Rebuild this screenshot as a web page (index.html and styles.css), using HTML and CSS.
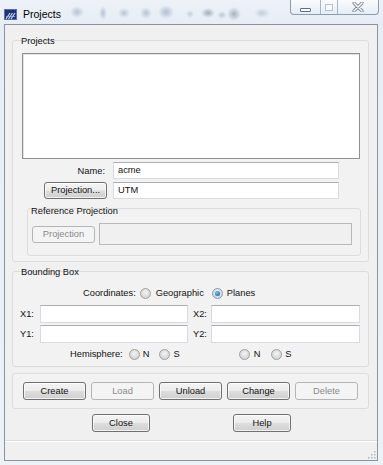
FILE: index.html
```
<!DOCTYPE html>
<html>
<head>
<meta charset="utf-8">
<link rel="stylesheet" href="styles.css">
</head>
<body>
<div class="window">
  <div class="titlebar">
    <svg class="app-icon" viewBox="0 0 13 11" width="13" height="11">
      <rect x="0" y="0" width="13" height="11" fill="#1d3478"/>
      <rect x="0.5" y="0.5" width="12" height="10" fill="none" stroke="#5a6ea8" stroke-width="1"/>
      <path d="M2 10 L6 4 M4.5 10 L8.5 4 M7 10 L11 4" stroke="#c8d4f0" stroke-width="1.2"/>
      <path d="M2 7.5 H11" stroke="#9fb2e0" stroke-width="0.8"/>
    </svg>
    <span class="title">Projects</span>
    <div class="caption">
      <span class="cap cap-min"><i class="min-glyph"></i></span>
      <span class="cap cap-max"><i class="max-glyph"></i></span>
      <span class="cap cap-close">
        <svg viewBox="0 0 12 10" width="12" height="10">
          <path d="M2 1 L10 9 M10 1 L2 9" stroke="#7d8a98" stroke-width="3.2" stroke-linecap="round"/>
          <path d="M2 1 L10 9 M10 1 L2 9" stroke="#ffffff" stroke-width="1.4" stroke-linecap="round"/>
        </svg>
      </span>
    </div>
  </div>

  <div class="client">
    <div class="group group-projects">
      <div class="group-title">Projects</div>
      <div class="listbox"></div>
      <div class="form-grid">
        <span class="lbl-right">Name:</span>
        <div class="field">acme</div>
        <button class="btn btn-proj">Projection...</button>
        <div class="field">UTM</div>
      </div>
      <div class="group group-ref">
        <div class="group-title">Reference Projection</div>
        <div class="ref-row">
          <button class="btn btn-disabled btn-refproj">Projection</button>
          <div class="field field-disabled"></div>
        </div>
      </div>
    </div>

    <div class="group group-bbox">
      <div class="group-title">Bounding Box</div>
      <div class="coords-row">
        <span>Coordinates:</span>
        <span class="radio r-geo"></span><span>Geographic</span>
        <span class="radio radio-on r-planes"></span><span>Planes</span>
      </div>
      <div class="xy-grid">
        <span>X1:</span><div class="field"></div>
        <span class="lbl2">X2:</span><div class="field"></div>
        <span>Y1:</span><div class="field"></div>
        <span class="lbl2">Y2:</span><div class="field"></div>
      </div>
      <div class="hemi-row">
        <span>Hemisphere:</span>
        <span class="radio h1"></span><span>N</span>
        <span class="radio h2"></span><span>S</span>
        <span class="radio h3"></span><span>N</span>
        <span class="radio h4"></span><span>S</span>
      </div>
    </div>

    <div class="group group-buttons">
      <button class="btn act">Create</button>
      <button class="btn act btn-disabled">Load</button>
      <button class="btn act">Unload</button>
      <button class="btn act">Change</button>
      <button class="btn act btn-disabled">Delete</button>
    </div>

    <div class="close-row">
      <button class="btn dlg">Close</button>
      <button class="btn dlg">Help</button>
    </div>

    <div class="separator"></div>
    <div class="statusbar">
      <svg class="grip" viewBox="0 0 8 8" width="8" height="8">
        <rect x="6" y="0" width="1.5" height="1.5" fill="#b8b8b8"/>
        <rect x="3" y="3" width="1.5" height="1.5" fill="#b8b8b8"/>
        <rect x="6" y="3" width="1.5" height="1.5" fill="#b8b8b8"/>
        <rect x="0" y="6" width="1.5" height="1.5" fill="#b8b8b8"/>
        <rect x="3" y="6" width="1.5" height="1.5" fill="#b8b8b8"/>
        <rect x="6" y="6" width="1.5" height="1.5" fill="#b8b8b8"/>
      </svg>
    </div>
  </div>
</div>
</body>
</html>
```
FILE: styles.css
```
* { box-sizing: border-box; }

html, body {
  margin: 0;
  padding: 0;
}

body {
  width: 383px;
  height: 465px;
  overflow: hidden;
  font-family: "Liberation Sans", Arial, sans-serif;
  font-size: 9.3px;
  color: #111;
}

.window {
  width: 383px;
  height: 465px;
  display: flex;
  flex-direction: column;
  background:
    radial-gradient(ellipse 7px 6px at 77px 12px, rgba(120,140,170,0.45), transparent),
    radial-gradient(ellipse 4px 7px at 103px 13px, rgba(120,140,170,0.45), transparent),
    radial-gradient(ellipse 6px 5px at 124px 13px, rgba(120,140,170,0.45), transparent),
    radial-gradient(ellipse 6px 6px at 146px 13px, rgba(120,140,170,0.45), transparent),
    radial-gradient(ellipse 8px 7px at 166px 12px, rgba(120,140,170,0.5), transparent),
    radial-gradient(ellipse 4px 4px at 190px 14px, rgba(120,140,170,0.35), transparent),
    radial-gradient(ellipse 7px 5px at 208px 13px, rgba(90,105,130,0.5), transparent),
    radial-gradient(ellipse 5px 4px at 222px 15px, rgba(120,140,170,0.4), transparent),
    radial-gradient(ellipse 7px 7px at 234px 14px, rgba(100,115,140,0.5), transparent),
    radial-gradient(ellipse 8px 5px at 262px 13px, rgba(120,140,170,0.35), transparent),
    linear-gradient(180deg, #edf2f8 0px, #e6edf4 24px, #edf2f7 465px);
}

/* Title bar */
.titlebar {
  height: 24px;
  display: flex;
  align-items: flex-start;
  flex: none;
}

.app-icon {
  margin: 9px 0 0 4px;
  flex: none;
}

.title {
  margin: 8px 0 0 6px;
  font-size: 10.5px;
  line-height: 12px;
  color: #000;
}

.caption {
  margin-left: auto;
  margin-right: 4px;
  height: 15px;
  display: flex;
  border: 1px solid #8c9cb0;
  border-top: none;
  border-radius: 0 0 4px 4px;
  background: linear-gradient(180deg, rgba(255,255,255,0.7), rgba(225,235,245,0.6));
  overflow: hidden;
}

.cap {
  height: 14px;
  display: flex;
  align-items: center;
  justify-content: center;
}

.cap-min { width: 30px; border-right: 1px solid #a6b4c4; }
.cap-max { width: 17px; border-right: 1px solid #a6b4c4; }
.cap-close { width: 40px; }

.min-glyph {
  display: block;
  width: 11px;
  height: 4px;
  margin-top: 5px;
  border: 1px solid #5f6e80;
  background: #fff;
  border-radius: 1px;
}

.max-glyph {
  display: block;
  width: 8px;
  height: 7px;
  border: 1px solid #b4c0cc;
  background: rgba(255,255,255,0.6);
}

/* Client area */
.client {
  flex: 1;
  margin: 0 5px 4px 4px;
  border: 1px solid #8a949e;
  background: #f0f0f0;
  display: flex;
  flex-direction: column;
}

.group {
  border: 1px solid #dcdcdc;
  border-radius: 3px;
  background: #f2f2f2;
}

.group-title {
  line-height: 12px;
  height: 12px;
  margin-top: -6px;
  margin-left: 7px;
  padding: 0 1px;
  align-self: flex-start;
  display: inline-block;
  background: transparent;
}

.group-projects {
  margin: 15px 8px 0 7px;
  padding-bottom: 5px;
  display: flex;
  flex-direction: column;
}

.listbox {
  margin: 6px 8px 0 9px;
  height: 106px;
  background: #fff;
  border: 1px solid #8e8f8f;
  box-shadow: inset 1px 1px 0 #e3e3e3;
}

.form-grid {
  margin: 3px 0 0 9px;
  display: grid;
  grid-template-columns: 85px 226px;
  grid-auto-rows: 17px;
  column-gap: 6px;
  row-gap: 3px;
  align-items: center;
}

.lbl-right {
  text-align: right;
  padding-right: 2px;
}

.field {
  height: 17px;
  background: #fff;
  border: 1px solid #d6dbe2;
  border-top-color: #abadb3;
  line-height: 15px;
  padding-left: 4px;
  white-space: nowrap;
}

.field-disabled {
  background: #f0f0f0;
  border: 1px solid #b9b9b9;
  height: 22px;
  flex: 1;
}

.btn {
  font-family: inherit;
  font-size: 9.3px;
  color: #111;
  height: 17px;
  padding: 0;
  border: 1px solid #707070;
  border-radius: 3px;
  background: linear-gradient(180deg, #f4f4f4 0%, #ececec 48%, #dddddd 52%, #cfcfcf 100%);
  box-shadow: inset 0 0 0 1px rgba(255,255,255,0.7);
  line-height: 15px;
}

.btn-disabled {
  color: #8a8a8a;
  border-color: #b3b6b8;
  background: #f4f4f4;
  box-shadow: none;
}

.btn-proj {
  width: 63px;
  justify-self: end;
}

.group-ref {
  margin: 9px 7px 0 14px;
  padding-bottom: 10px;
  display: flex;
  flex-direction: column;
}

.group-ref .group-title {
  margin-top: -4px;
  margin-left: 2px;
}

.ref-row {
  margin: 6px 8px 0 4px;
  display: flex;
  align-items: center;
  gap: 4px;
}

.btn-refproj {
  width: 63px;
  flex: none;
}

/* Bounding box */
.group-bbox {
  margin: 9px 8px 0 7px;
  padding-bottom: 3px;
  display: flex;
  flex-direction: column;
}

.coords-row,
.hemi-row {
  height: 18px;
  display: flex;
  align-items: center;
  white-space: nowrap;
}

.coords-row {
  margin-top: 6px;
  padding-left: 70px;
}

.radio {
  width: 11px;
  height: 11px;
  border-radius: 50%;
  border: 1px solid #a0a0a0;
  background: radial-gradient(circle at 50% 40%, #f4f4f4 0%, #dcdcdc 55%, #c6c6c6 100%);
  flex: none;
  position: relative;
}

.radio-on {
  border-color: #7d9cbc;
}

.radio-on::after {
  content: "";
  position: absolute;
  left: 2px;
  top: 2px;
  width: 5px;
  height: 5px;
  border-radius: 50%;
  background: radial-gradient(circle at 40% 35%, #7fc4f0 0%, #1f73b8 70%, #1a5a94 100%);
}

.r-geo { margin: 0 5px 0 4px; }
.r-planes { margin: 0 4px 0 8px; }

.xy-grid {
  margin: 3px 0 0 7px;
  display: grid;
  grid-template-columns: 20px 148px 23px 149px;
  grid-auto-rows: 18px;
  row-gap: 2px;
  align-items: center;
}

.xy-grid .field {
  height: 18px;
}

.lbl2 {
  padding-left: 5px;
}

.hemi-row {
  margin-top: 2px;
  padding-left: 57px;
}

.h1 { margin: 0 3px 0 6px; }
.h2 { margin: 0 3px 0 10px; }
.h3 { margin: 0 4px 0 59px; }
.h4 { margin: 0 3px 0 11px; }

/* Action buttons */
.group-buttons {
  margin: 6px 8px 0 7px;
  padding: 8px 0 8px 10px;
  display: flex;
  gap: 5px;
}

.act {
  width: 63px;
  height: 18px;
}

.close-row {
  margin-top: 5px;
  padding-left: 87px;
  display: flex;
  gap: 83px;
}

.dlg {
  width: 58px;
  height: 18px;
}

.separator {
  margin-top: 8px;
  height: 2px;
  border-top: 1px solid #dcdcdc;
  border-bottom: 1px solid #ffffff;
}

.statusbar {
  flex: 1;
  display: flex;
  justify-content: flex-end;
  align-items: flex-end;
  padding: 0 1px 1px 0;
}
```
